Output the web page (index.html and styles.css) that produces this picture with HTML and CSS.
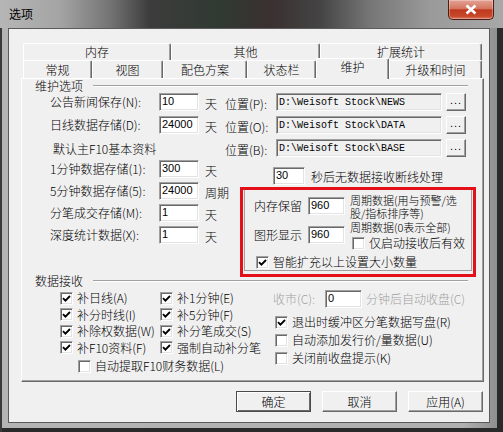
FILE: index.html
```html
<!DOCTYPE html>
<html lang="zh-CN">
<head>
  <meta charset="UTF-8">
  <title>选项</title>
  <link rel="stylesheet" href="styles.css">
</head>
<body>
  <div class="window">
    <div class="titlebar">
      <span class="title">选项</span>
      <span class="close">
        <svg width="14" height="11" viewBox="0 0 14 11"><path d="M2.5 1.5 L11.5 9.5 M11.5 1.5 L2.5 9.5"/></svg>
      </span>
    </div>

    <div class="client">
      <div class="tabctl">
        <div class="tabrow back">
          <span class="tab">内存</span>
          <span class="tab">其他</span>
          <span class="tab">扩展统计</span>
        </div>
        <div class="tabrow front">
          <span class="tab">常规</span>
          <span class="tab">视图</span>
          <span class="tab">配色方案</span>
          <span class="tab">状态栏</span>
          <span class="tab sel">维护</span>
          <span class="tab">升级和时间</span>
        </div>

        <div class="page">
          <div class="gb-head"><span>维护选项</span></div>

          <div class="mrow">
            <span class="lbl">公告新闻保存(N):</span>
            <input class="field num" value="10">
            <span class="unit">天</span>
            <span class="loc">位置(P):</span>
            <input class="field path" value="D:\Weisoft Stock\NEWS" readonly>
            <span class="dots">...</span>
          </div>
          <div class="mrow">
            <span class="lbl">日线数据存储(D):</span>
            <input class="field num" value="24000">
            <span class="unit">天</span>
            <span class="loc">位置(O):</span>
            <input class="field path" value="D:\Weisoft Stock\DATA" readonly>
            <span class="dots">...</span>
          </div>
          <div class="mrow">
            <span class="lbl wide">默认主F10基本资料</span>
            <span class="loc">位置(B):</span>
            <input class="field path" value="D:\Weisoft Stock\BASE" readonly>
            <span class="dots">...</span>
          </div>

          <div class="lower">
            <div class="lcol">
              <div class="mrow">
                <span class="lbl">1分钟数据存储(1):</span>
                <input class="field num" value="300">
                <span class="unit">天</span>
              </div>
              <div class="mrow">
                <span class="lbl">5分钟数据存储(5):</span>
                <input class="field num" value="24000">
                <span class="unit">周期</span>
              </div>
              <div class="mrow">
                <span class="lbl">分笔成交存储(M):</span>
                <input class="field num" value="1">
                <span class="unit">天</span>
              </div>
              <div class="mrow">
                <span class="lbl">深度统计数据(X):</span>
                <input class="field num" value="1">
                <span class="unit">天</span>
              </div>
            </div>

            <div class="rcol">
              <div class="wait">
                <input class="field secs" value="30">
                <span>秒后无数据接收断线处理</span>
              </div>
              <div class="redbox">
                <div class="inner">
                  <div class="keep">
                    <span class="klbl">内存保留</span>
                    <input class="field small" value="960">
                    <span class="desc">周期数据(用与预警/选<br>股/指标排序等)</span>
                  </div>
                  <div class="keep show">
                    <span class="klbl">图形显示</span>
                    <input class="field small" value="960">
                    <div class="desc">
                      <div>周期数据(0表示全部)</div>
                      <label class="chk only"><span class="box"></span>仅启动接收后有效</label>
                    </div>
                  </div>
                  <label class="chk smart"><span class="box"><svg viewBox="0 0 9 9"><path d="M1 4.2 3.4 6.6 8 2"/></svg></span>智能扩充以上设置大小数量</label>
                </div>
              </div>
            </div>
          </div>

          <div class="gb-head data"><span>数据接收</span></div>
          <div class="dbody">
            <div class="dleft">
              <div class="chkgrid">
                <label class="chk"><span class="box"><svg viewBox="0 0 9 9"><path d="M1 4.2 3.4 6.6 8 2"/></svg></span>补日线(A)</label>
                <label class="chk"><span class="box"><svg viewBox="0 0 9 9"><path d="M1 4.2 3.4 6.6 8 2"/></svg></span>补1分钟(E)</label>
                <label class="chk"><span class="box"><svg viewBox="0 0 9 9"><path d="M1 4.2 3.4 6.6 8 2"/></svg></span>补分时线(I)</label>
                <label class="chk"><span class="box"><svg viewBox="0 0 9 9"><path d="M1 4.2 3.4 6.6 8 2"/></svg></span>补5分钟(F)</label>
                <label class="chk"><span class="box"><svg viewBox="0 0 9 9"><path d="M1 4.2 3.4 6.6 8 2"/></svg></span>补除权数据(W)</label>
                <label class="chk"><span class="box"><svg viewBox="0 0 9 9"><path d="M1 4.2 3.4 6.6 8 2"/></svg></span>补分笔成交(S)</label>
                <label class="chk"><span class="box"><svg viewBox="0 0 9 9"><path d="M1 4.2 3.4 6.6 8 2"/></svg></span>补F10资料(F)</label>
                <label class="chk"><span class="box"><svg viewBox="0 0 9 9"><path d="M1 4.2 3.4 6.6 8 2"/></svg></span>强制自动补分笔</label>
              </div>
              <label class="chk extra"><span class="box"></span>自动提取F10财务数据(L)</label>
            </div>

            <div class="dright">
              <div class="shut">
                <span class="dim slbl">收市(C):</span>
                <input class="field shutnum" value="0">
                <span class="dim">分钟后自动收盘(C)</span>
              </div>
              <label class="chk"><span class="box"><svg viewBox="0 0 9 9"><path d="M1 4.2 3.4 6.6 8 2"/></svg></span>退出时缓冲区分笔数据写盘(R)</label>
              <label class="chk"><span class="box"></span>自动添加发行价/量数据(U)</label>
              <label class="chk"><span class="box"></span>关闭前收盘提示(K)</label>
            </div>
          </div>
        </div>
      </div>

      <div class="btns">
        <button class="btn def">确定</button>
        <button class="btn">取消</button>
        <button class="btn">应用(A)</button>
      </div>
    </div>
  </div>
</body>
</html>
```

FILE: styles.css
```css
* { box-sizing: border-box; }
body { margin: 0; background: #202020; font-family: "Noto Sans CJK SC", "Liberation Sans", sans-serif; font-size: 12px; font-weight: 300; color: #000; }

.window {
  width: 503px; height: 432px; display: flex; flex-direction: column;
  background: linear-gradient(90deg, #b4b4b4, #b0b0b0 92%, #8a8a8a);
  box-shadow: inset 2px 0 #3a3a3a, inset -6px 0 #2a2a2a, inset 0 -4px #2a2a2a;
}
.titlebar {
  height: 28px; flex: none; display: flex; align-items: flex-start; padding-left: 9px;
  background: linear-gradient(90deg, #b6b6b6 0, #a4a4a4 60px, #747474 110px, #3c3c3c 150px, #303a32 220px, #3a3030 270px, #444 320px, #767676 370px, #9a9a9a 430px, #a8a8a8 503px);
}
.title { line-height: 28px; font-weight: 400; }
.close {
  width: 46px; height: 20px; margin: 0 9px 0 auto; display: flex; align-items: center; justify-content: center;
  border: 1px solid #4d1c14; border-top: none; border-radius: 0 0 5px 5px;
  background: linear-gradient(#e3a396, #d4765f 45%, #c0391f 52%, #c64829 85%, #d9785a);
  box-shadow: inset 0 0 0 1px rgba(255, 255, 255, .3);
}
.close path { stroke: #fff; stroke-width: 2.6; }

.client { margin: 0 13px 0 8px; height: 395px; background: #f0f0f0; border: 1px solid #5a5a5a; }

/* tabs */
.tabctl { margin: 14px 0 0 12px; width: 463px; }
.tabrow { display: flex; padding: 0 2px; height: 17px; align-items: flex-start; }
.tabrow.front { height: 18px; }
.tab {
  flex: none; height: 100%; text-align: center; line-height: 16px; background: #f0f0f0;
  border-top: 1px solid #fff; border-left: 1px solid #fff; border-right: 1px solid #696969;
  border-radius: 2px 2px 0 0; box-shadow: inset -1px 0 #a0a0a0;
}
.front .tab { line-height: 17px; }
.back .tab:nth-child(1) { width: 148px; }
.back .tab:nth-child(2) { width: 149px; }
.back .tab:nth-child(3) { width: 162px; }
.front .tab:nth-child(1) { width: 69px; }
.front .tab:nth-child(2) { width: 71px; }
.front .tab:nth-child(3) { width: 84px; }
.front .tab:nth-child(4) { width: 69px; }
.front .tab:nth-child(5) { width: 73px; }
.front .tab:nth-child(6) { width: 93px; }
.front .tab.sel { margin-top: -2px; height: 21px; line-height: 16px; position: relative; z-index: 1; }

.page {
  width: 463px; height: 304px;
  border: 1px solid; border-color: #fff #696969 #696969 #fff;
  box-shadow: inset -1px -1px #a0a0a0;
}

/* group headers */
.gb-head { display: flex; align-items: center; height: 14px; padding-left: 13px; margin-right: 15px; }
.gb-head span { line-height: 14px; }
.gb-head::after { content: ""; flex: 1; margin-left: 10px; border-top: 1px solid #a0a0a0; border-bottom: 1px solid #fff; }
.gb-head.data { margin-top: -3px; }

/* inputs */
.field {
  height: 18px; margin: 0; padding: 0 0 2px 2px; outline: none; background: #fff;
  border: 1px solid; border-color: #a0a0a0 #fff #fff #a0a0a0;
  box-shadow: inset 1px 1px #696969, inset -1px -1px #e3e3e3;
  font: 11px "Liberation Sans", sans-serif; color: #000;
}
.num { width: 40px; }
.path { width: 166px; background: #f0f0f0; font: 10px "Liberation Mono", monospace; padding-bottom: 0; }
.secs { width: 32px; }
.small { width: 37px; margin: 3px 0 0 6px; }
.shutnum { width: 37px; }

/* maintenance rows */
.mrow { display: flex; height: 18px; margin-top: 5px; padding-left: 28px; }
.gb-head + .mrow { margin-top: 0; }
.lbl { width: 109px; line-height: 18px; white-space: nowrap; }
.lbl.wide { width: 172px; margin-left: 3px; padding-top: 1px; }
.unit { width: 20px; margin-left: 6px; line-height: 18px; padding-top: 2px; white-space: nowrap; }
.loc { width: 51px; line-height: 18px; padding-top: 2px; white-space: nowrap; }
.dots {
  width: 20px; height: 18px; margin-left: 4px; text-align: center; line-height: 15px;
  font: 11px "Liberation Sans", sans-serif; letter-spacing: 1px;
  border: 1px solid; border-color: #fff #696969 #696969 #fff; box-shadow: inset -1px -1px #a0a0a0;
}

.lower { display: flex; }
.lcol { width: 218px; padding-top: 3px; }
.lcol .mrow { margin-top: 4px; }
.lcol .mrow:first-child { margin-top: 0; }
.rcol { width: 236px; }
.wait { display: flex; height: 18px; margin-top: 10px; padding-left: 33px; }
.wait span { margin-left: 6px; line-height: 18px; padding-top: 1px; }

.redbox { margin-top: 2px; height: 90px; border: 3px solid #e3101a; }
.inner {
  height: 81px; margin: 0 1px; padding-top: 4px;
  border: 1px solid #a0a0a0; border-top: none;
}
.keep { display: flex; align-items: flex-start; padding-left: 9px; }
.klbl { width: 48px; line-height: 18px; margin-top: 3px; }
.keep .desc { margin-left: 5px; font-size: 11px; line-height: 13px; }
.keep.show { margin-top: 1px; }
.keep.show .klbl { margin-top: 5px; }
.keep.show .small { margin-top: 5px; }
.chk.only { height: 14px; margin-top: 2px; padding-left: 2px; font-size: 12px; }
.chk.smart { height: 14px; margin-top: 5px; padding-left: 11px; }

/* checkboxes */
.chk { display: flex; align-items: center; white-space: nowrap; line-height: 14px; }
.box {
  flex: none; width: 13px; height: 13px; margin-right: 4px; background: #fff;
  display: flex; align-items: center; justify-content: center;
  border: 1px solid; border-color: #a0a0a0 #fff #fff #a0a0a0;
  box-shadow: inset 1px 1px #696969, inset -1px -1px #e3e3e3;
}
.box svg { width: 9px; height: 9px; }
.box path { fill: none; stroke: #000; stroke-width: 1.9; }

/* data receive */
.dbody { display: flex; margin-top: 2px; }
.dleft { width: 251px; padding-left: 38px; }
.chkgrid { display: grid; grid-template-columns: 100px 113px; grid-auto-rows: 16.5px; }
.chk.extra { height: 20px; padding-left: 18px; }
.dright .chk { height: 18px; padding-left: 2px; }
.dright .chk:nth-child(2) { margin-top: 5px; }
.shut { display: flex; height: 18px; align-items: center; }
.dim { color: #a0a0a0; white-space: nowrap; line-height: 18px; }
.slbl { width: 52px; }
.shut .dim:last-child { margin-left: 4px; }

/* buttons */
.btns { display: flex; gap: 11px; margin-top: 9px; padding-left: 227px; }
.btn {
  width: 75px; height: 21px; padding: 0; background: #f0f0f0;
  font: 300 12px "Noto Sans CJK SC", sans-serif; line-height: 18px; color: #000;
  border: 1px solid; border-color: #fff #696969 #696969 #fff; box-shadow: inset -1px -1px #a0a0a0;
}
.btn.def { border-color: #4a4a4a; box-shadow: inset 1px 1px #fff, inset -1px -1px #696969; }
```
